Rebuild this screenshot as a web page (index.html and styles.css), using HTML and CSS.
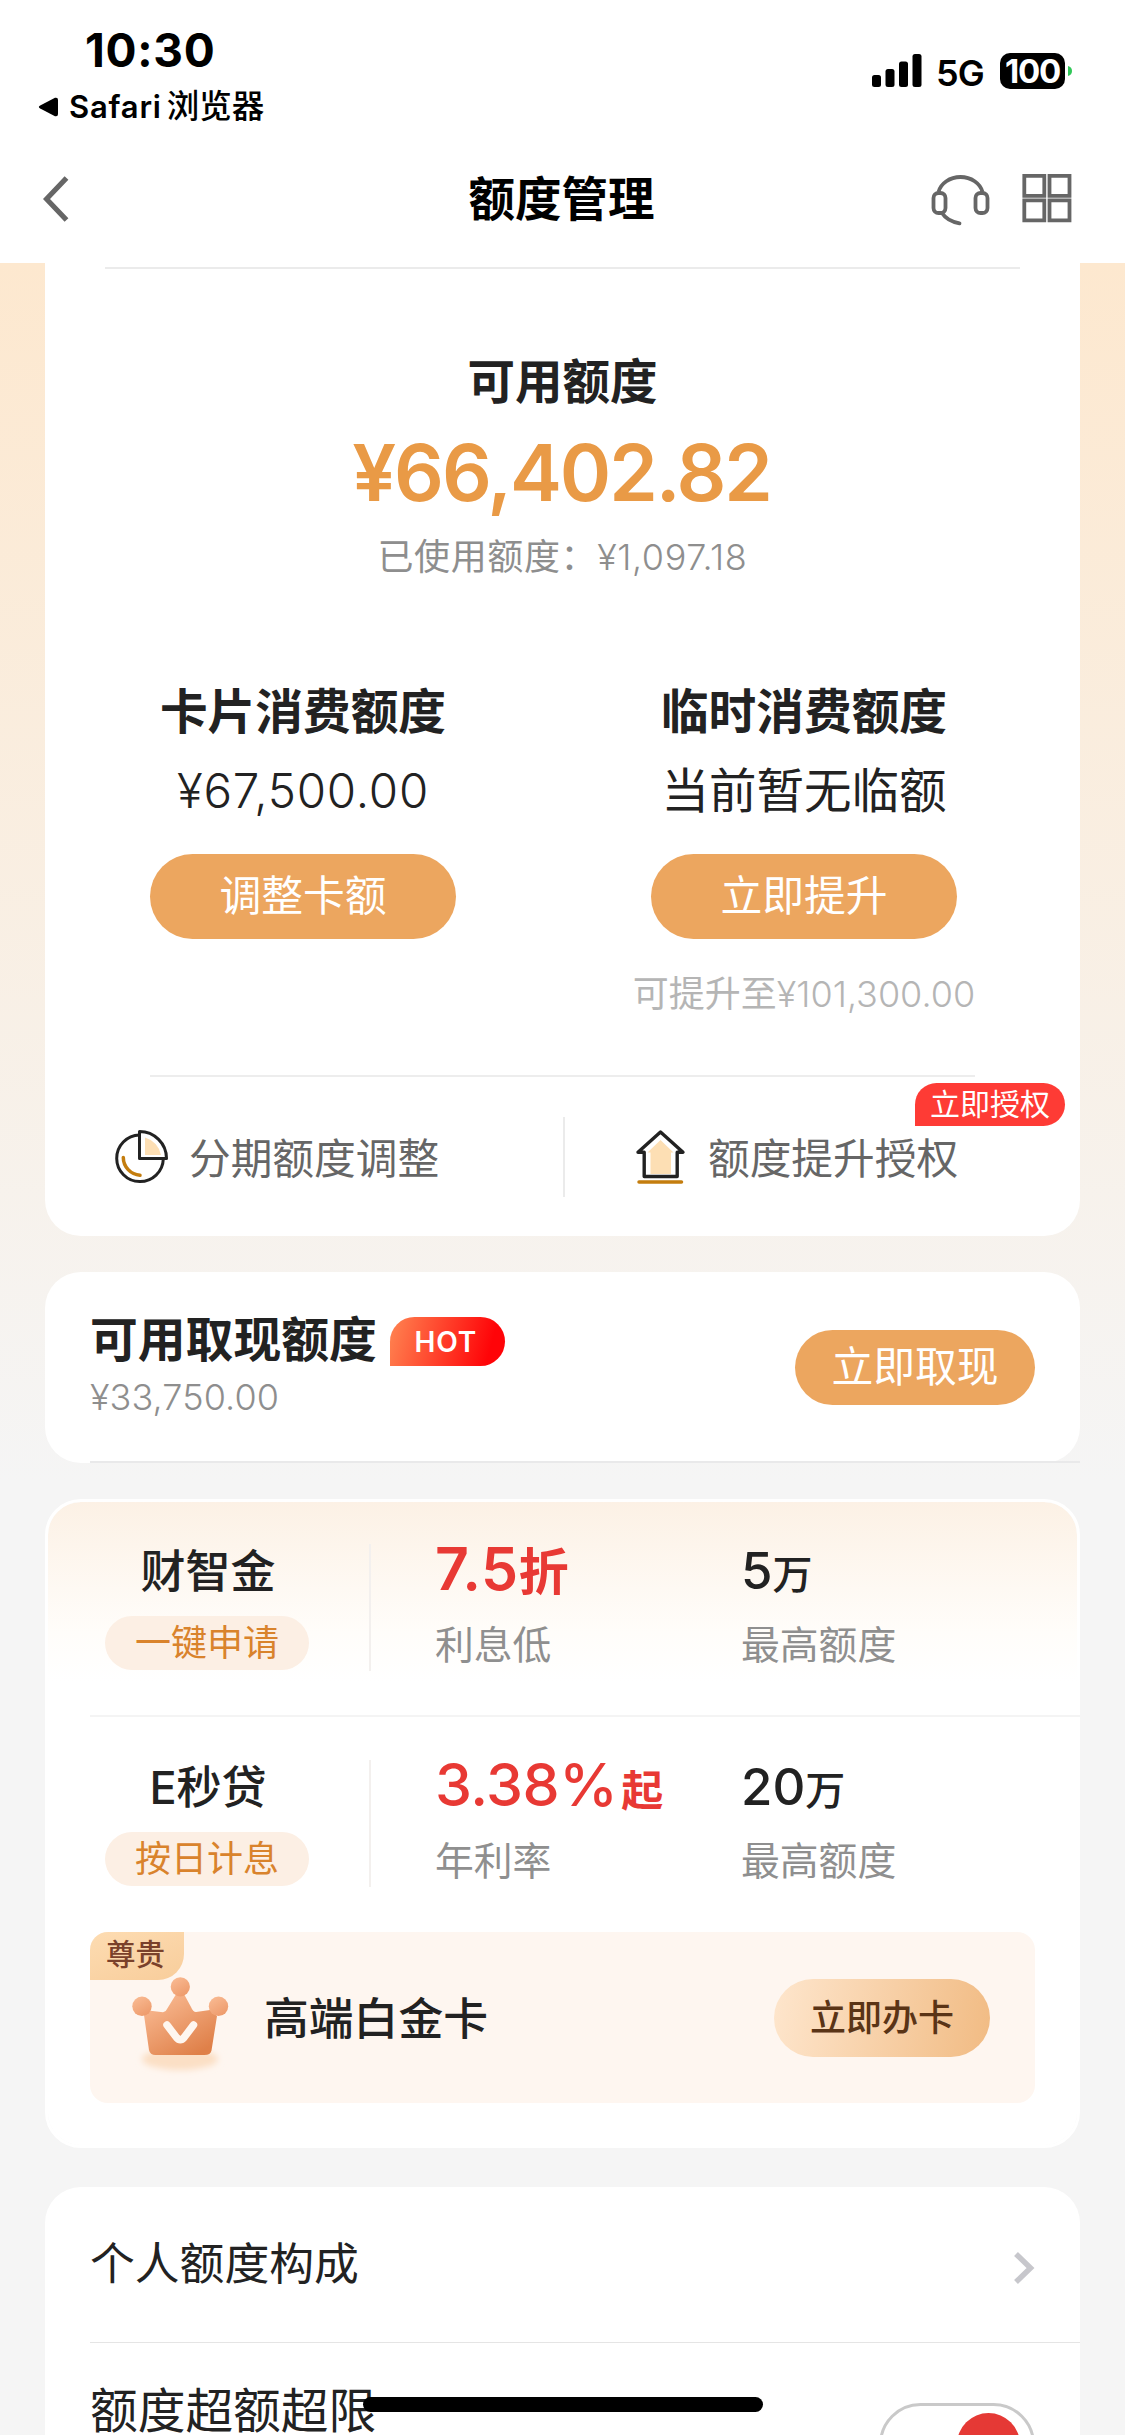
FILE: index.html
```html
<!DOCTYPE html>
<html lang="zh-CN">
<head>
<meta charset="utf-8">
<title>额度管理</title>
<link rel="stylesheet" href="styles.css">
</head>
<body>
<div class="screen">
  <header class="top">
    <div class="status">
      <div class="status-left">
        <div class="time">10:30</div>
        <div class="return-app">
          <svg width="21" height="20" viewBox="0 0 21 20"><path d="M2.2 8.4 17 .8Q20 0 20 3v14q0 3-3 2.200L2.200 11.600Q-.5 10 2.200 8.400Z"/></svg>
          <span class="app-en">Safari</span><span class="app-cn">浏览器</span>
        </div>
      </div>
      <div class="status-right">
        <svg width="50" height="34" viewBox="0 0 50 34"><rect x="0" y="21" width="9" height="12" rx="2.500"/><rect x="13.500" y="15" width="9" height="18" rx="2.500"/><rect x="27" y="7.500" width="9" height="25.500" rx="2.500"/><rect x="40.500" y="0" width="9" height="33" rx="2.500"/></svg>
        <span class="net">5G</span>
        <span class="battery">100</span>
        <svg class="nub" width="4" height="10" viewBox="0 0 4 10"><path fill="#31c759" d="M0 0q4 1 4 5t-4 5Z"/></svg>
      </div>
    </div>
    <nav class="nav">
      <svg width="26" height="46" viewBox="0 0 26 46"><path d="M23.500 2 3.500 23l20 21" fill="none" stroke="#666" stroke-width="5.200"/></svg>
      <h1>额度管理</h1>
      <div class="nav-actions">
        <svg width="60" height="56" viewBox="0 0 60 56" fill="none" stroke="#666" stroke-width="3.800"><path d="M8.500 22a22.500 19 0 0 1 44 0"/><rect x="3.500" y="23" width="12" height="20" rx="5"/><rect x="45.500" y="23" width="12" height="20" rx="5"/><path d="M12 43q5 8 17.500 10.300" stroke-linecap="round"/></svg>
        <svg width="50" height="50" viewBox="0 0 50 50" fill="none" stroke="#666" stroke-width="3.800"><path d="M2.300 2.800h20v20h-20zM27.500 2.800h20v20h-20zM2.300 27.300h20v20h-20zM27.500 27.300h20v20h-20z"/></svg>
      </div>
    </nav>
  </header>

  <main class="content">
    <section class="card quota">
      <div class="quota-rule"></div>
      <h2 class="quota-title">可用额度</h2>
      <div class="quota-amount">¥66,402.82</div>
      <div class="quota-used">已使用额度：<span class="num">¥1,097.18</span></div>
      <div class="limits">
        <div class="limit">
          <h3>卡片消费额度</h3>
          <div class="limit-value num">¥67,500.00</div>
          <button class="btn">调整卡额</button>
        </div>
        <div class="limit">
          <h3>临时消费额度</h3>
          <div class="limit-value">当前暂无临额</div>
          <button class="btn">立即提升</button>
          <div class="limit-note">可提升至<span class="num">¥101,300.00</span></div>
        </div>
      </div>
      <div class="links">
        <a class="link link-a">
          <svg width="58" height="58" viewBox="0 0 58 58" fill="none" stroke="#222" stroke-width="3"><path d="M26.500 7A23.300 23.300 0 1 0 50.300 31"/><path d="M26.500 3.500A27 27 0 0 1 53.500 30.500h-27Z" stroke-linejoin="round"/><path d="M32 9.500q13 4 16 17.500H32Z" fill="#fddfb4" stroke="none"/><path d="M10.300 29.500A18 18 0 0 0 27 47.300" stroke="#c47d0e" stroke-width="3.500" stroke-linecap="round"/></svg>
          <span>分期额度调整</span>
        </a>
        <i class="links-split"></i>
        <a class="link link-b">
          <svg width="52" height="58" viewBox="0 0 52 58" fill="none"><path d="m25.500 12 13 12.500H36V46H15.500V24.500H12.500Z" fill="#fddfb4"/><path d="M25.500 4 48 24.200h-5.800v24.300H9.200V24.200H3Z" stroke="#222" stroke-width="3.400" stroke-linejoin="round"/><path d="M4 54h42.500" stroke="#c47d0e" stroke-width="3.500" stroke-linecap="round"/></svg>
          <span>额度提升授权</span>
        </a>
        <b class="auth-tag">立即授权</b>
      </div>
    </section>

    <section class="card cash">
      <div class="cash-info">
        <div class="cash-head"><h2>可用取现额度</h2><span class="hot">HOT</span></div>
        <div class="cash-value num">¥33,750.00</div>
      </div>
      <button class="btn btn-cash">立即取现</button>
      <i class="cash-rule"></i>
    </section>

    <section class="card loans">
      <div class="loan loan-first">
        <div class="loan-name"><h3>财智金</h3><span class="pill">一键申请</span></div>
        <div class="loan-rate"><p class="rate"><span class="seven">7.5</span><span class="zhe">折</span></p><p class="cap">利息低</p></div>
        <div class="loan-max"><p class="max">5<span>万</span></p><p class="cap">最高额度</p></div>
      </div>
      <div class="loan loan-second">
        <div class="loan-name"><h3>E秒贷</h3><span class="pill">按日计息</span></div>
        <div class="loan-rate"><p class="rate"><span class="pct">3.38%</span><span class="qi">起</span></p><p class="cap">年利率</p></div>
        <div class="loan-max"><p class="max">20<span>万</span></p><p class="cap">最高额度</p></div>
      </div>
      <div class="banner">
        <b class="banner-tag">尊贵</b>
        <svg class="crown" width="100" height="104" viewBox="0 0 100 104">
          <defs>
            <linearGradient id="cg" x1="0" y1="0" x2=".7" y2="1"><stop offset="0" stop-color="#fcc09a"/><stop offset="1" stop-color="#df8049"/></linearGradient>
            <linearGradient id="bg" x1="0" y1="0" x2=".6" y2="1"><stop offset="0" stop-color="#fabd96"/><stop offset="1" stop-color="#ee9c6d"/></linearGradient>
            <filter id="soft" x="-20%" y="-50%" width="140%" height="200%"><feGaussianBlur stdDeviation="3"/></filter>
          </defs>
          <ellipse cx="50" cy="84" rx="38" ry="11" fill="#fbdfc5" filter="url(#soft)"/>
          <path d="M14 40 20.500 35.700 33 37.300q3-.4 4-3.300L45.600 20h8.900L61 32q2 5 5 5l14-2 7 6-5.500 34.500Q80.500 80 74.500 80h-49Q20 80 19 75Z" fill="url(#cg)"/>
          <circle cx="50.300" cy="11.800" r="9.600" fill="url(#bg)"/><circle cx="12" cy="31.300" r="9.700" fill="url(#bg)"/><circle cx="88.500" cy="31.300" r="9.700" fill="url(#bg)"/>
          <path d="M37 50 46.500 62.500q3.800 4.500 7.600 0L63.500 50" fill="none" stroke="#fef6ef" stroke-width="7.500" stroke-linecap="round"/>
        </svg>
        <h3>高端白金卡</h3>
        <button class="btn-gold">立即办卡</button>
      </div>
    </section>

    <section class="card settings">
      <div class="row row-link">
        <span>个人额度构成</span>
        <svg width="22" height="34" viewBox="0 0 22 34"><path d="m3 3 14.500 14L3 31" fill="none" stroke="#c7c7cc" stroke-width="5.500"/></svg>
      </div>
      <div class="row row-switch">
        <span>额度超额超限</span>
        <span class="switch"><i></i></span>
      </div>
    </section>
  </main>
  <div class="home-bar"></div>
</div>
</body>
</html>
```
FILE: styles.css
```css
* { box-sizing: border-box; margin: 0; padding: 0; }
body {
  font-family: Inter, "Noto Sans CJK SC", sans-serif;
  color: #222;
  background: #f5f5f5;
}
h1, h2, h3 { font-weight: 700; }
i, b { font-style: normal; font-weight: 400; }
button { border: 0; font-family: inherit; display: block; }
svg { display: block; flex: none; }
.num { font-weight: 300; }

.screen {
  position: relative;
  width: 1125px;
  height: 2435px;
  overflow: hidden;
  background: linear-gradient(#fde8cf 263px, #f5f5f5 1480px);
}

/* status bar and navigation */
.top { height: 263px; background: #fff; color: #000; }
.status { height: 136px; display: flex; justify-content: space-between; }
.status-left { padding: 23px 0 0 38px; }
.time { padding-left: 47px; font-size: 46px; line-height: 54px; font-weight: 700; letter-spacing: 0.7px; }
.return-app { display: flex; align-items: center; height: 60px; line-height: 60px; font-weight: 600; }
.app-en { margin-left: 10px; font-size: 31px; letter-spacing: 0.8px; }
.app-cn { margin-left: 5px; font-size: 32.500px; font-weight: 500; }
.status-right { display: flex; align-items: center; height: 36px; margin: 53px 53px 0 0; }
.net { width: 50px; margin: 3px 0 0 14px; font-size: 36px; line-height: 36px; font-weight: 600; letter-spacing: -0.8px; white-space: nowrap; }
.battery { width: 65px; height: 36px; margin-left: 14px; border-radius: 10px; background: #000; color: #fff; font-size: 33px; line-height: 37px; font-weight: 700; letter-spacing: -1.2px; text-align: center; }
.nub { margin-left: 3px; }
.nav { display: grid; grid-template-columns: 1fr auto 1fr; align-items: center; height: 126px; padding: 0 53px 0 43px; }
.nav h1 { font-size: 46.500px; line-height: 60px; margin-left: 8px; }
.nav-actions { display: flex; justify-content: flex-end; align-items: center; gap: 32px; margin-top: -2px; }

/* cards */
.content { padding: 0 45px; }
.card { border-radius: 36px; background: #fff; }
.btn { width: 306px; height: 85px; border-radius: 43px; background: #eca65f; color: #fff; font-size: 41.800px; line-height: 85px; text-align: center; }

.quota { height: 973px; border-radius: 0 0 36px 36px; padding-top: 4px; text-align: center; }
.quota-rule { height: 2px; margin: 0 60px; background: #ebebeb; }
.quota-title { margin-top: 83px; font-size: 47.500px; line-height: 60px; }
.quota-amount { margin-top: 20px; font-size: 78px; line-height: 82px; font-weight: 560; letter-spacing: -2.1px; padding-right: 2px; color: #e99a46; }
.quota-used { margin-top: 19px; font-size: 36px; line-height: 48px; color: #8e8e8e; letter-spacing: 0.6px; }
.limits { display: flex; justify-content: space-between; height: 378px; margin: 101px 63px 0 45px; }
.limits .limit { width: 426px; display: flex; flex-direction: column; align-items: center; }
.limit h3 { font-size: 47.700px; line-height: 60px; }
.limit-value { margin-top: 19px; font-size: 47.500px; line-height: 60px; }
.limit-value.num { letter-spacing: 0.8px; }
.limit .btn { margin-top: 33px; }
.limit-note { margin-top: 31px; font-size: 36px; line-height: 48px; color: #b5b5b5; }
.links { position: relative; display: flex; align-items: center; height: 168px; margin-top: 13px; }
.links::before { content: ""; position: absolute; left: 105px; right: 105px; top: 2px; height: 2px; background: #ededed; }
.link { display: flex; align-items: center; color: #666; font-size: 41.700px; line-height: 60px; }
.link span { margin-top: 3px; }
.link-a { width: 518px; padding-left: 68px; gap: 18px; }
.link-b { padding-left: 70px; gap: 21px; }
.links-split { width: 2px; height: 80px; background: #ebebeb; }
.auth-tag { position: absolute; right: 15px; top: 10px; width: 150px; height: 43px; border-radius: 22px 22px 22px 0; background: #fe3b35; color: #fff; font-size: 30px; line-height: 43px; }

.cash { position: relative; display: flex; justify-content: space-between; height: 191px; margin-top: 36px; padding: 0 45px; }
.cash-head { display: flex; align-items: center; height: 60px; margin-top: 38px; }
.cash-head h2 { font-size: 47.800px; line-height: 60px; }
.hot { width: 115px; height: 49px; margin: 3px 0 0 13px; border-radius: 25px 25px 25px 0; background: linear-gradient(105deg, #ff7d4d 5%, #ff0408 85%); color: #fff; font-size: 28px; line-height: 50px; font-weight: 600; text-align: center; letter-spacing: 0.8px; padding-right: 3px; }
.cash-value { margin-top: 3px; font-size: 36px; line-height: 48px; letter-spacing: 0.1px; color: #8e8e8e; }
.btn-cash { width: 240px; height: 75px; margin-top: 58px; line-height: 75px; }
.cash-rule { position: absolute; left: 45px; right: 0; bottom: 0; height: 2px; background: #e9e9ea; }

.loans { height: 649px; margin-top: 36px; border: 3px solid #fff; background: linear-gradient(#fcf1e5, #fffdfa 130px, #fff 180px) padding-box #fff; }
.loan { display: flex; height: 215px; padding-left: 57px; }
.loan-first { margin-right: -3px; background: linear-gradient(#f4f4f4, #f4f4f4) 42px 100% / 100% 2px no-repeat; }
.loan-second { padding-top: 1px; }
.loan-name { position: relative; width: 204px; display: flex; flex-direction: column; align-items: center; }
.loan-name::after { content: ""; position: absolute; right: -62px; top: 42px; width: 2px; height: 127px; background: #f3f0ee; }
.loan-name h3 { margin: 40px 0 0 2px; font-size: 45px; line-height: 60px; font-weight: 500; }
.pill { width: 204px; height: 54px; margin-top: 14px; border-radius: 27px; background: #fcefe4; color: #d9832c; font-size: 36px; line-height: 54px; text-align: center; }
.loan-rate { width: 306px; margin-left: 126px; }
.rate { height: 72px; margin-top: 31px; line-height: 72px; color: #e83934; font-weight: 500; white-space: nowrap; }
.seven { font-size: 59px; font-weight: 600; letter-spacing: 0.6px; }
.zhe { font-size: 50px; font-weight: 700; }
.pct { font-size: 59px; letter-spacing: -0.5px; }
.qi { margin-left: 4px; font-size: 42px; font-weight: 700; }
.cap { margin-top: 10px; font-size: 38.800px; line-height: 60px; color: #8f8f8f; }
.max { height: 72px; margin-top: 31px; font-size: 51px; line-height: 75px; font-weight: 500; }
.max span { font-size: 40px; }

.banner { position: relative; display: flex; align-items: center; width: 945px; height: 171px; margin-left: 42px; border-radius: 18px; background: #fef6f0; padding: 1px 45px 0 40px; }
.banner-tag { position: absolute; left: 0; top: 0; width: 94px; height: 48px; border-radius: 18px 0 26px 0; background: linear-gradient(160deg, #fddcb2, #f8cd9b); color: #7a412b; font-size: 29.500px; line-height: 45px; font-weight: 500; padding-left: 16px; }
.crown { position: relative; margin-top: 18px; }
.banner h3 { margin: 1px 0 0 34px; font-size: 44.800px; line-height: 60px; font-weight: 500; }
.btn-gold { width: 216px; height: 78px; margin-left: auto; border-radius: 39px; background: linear-gradient(100deg, #fee6cd, #f1bb83); color: #5a3416; font-size: 36px; line-height: 77px; font-weight: 500; }

.settings { height: 300px; margin-top: 39px; }
.row { display: flex; justify-content: space-between; padding: 0 45px; }
.row-link { height: 156px; align-items: center; background: linear-gradient(#e5e5e5, #e5e5e5) 45px 100% / 100% 1px no-repeat; font-size: 44.800px; }
.row-link span { margin-top: -9px; }
.row-link svg { margin-top: 5px; }
.row-switch { font-size: 47.700px; line-height: 60px; padding-top: 38px; }
.switch { display: block; width: 156px; height: 83px; margin-top: 22px; border: 3px solid #c9c9c9; border-radius: 42px; padding: 7px 12px; }
.switch i { display: block; width: 63px; height: 63px; margin-left: auto; border-radius: 50%; background: #e53935; }

.home-bar { position: absolute; left: 363px; bottom: 23px; width: 400px; height: 15px; border-radius: 8px; background: #000; }
```
